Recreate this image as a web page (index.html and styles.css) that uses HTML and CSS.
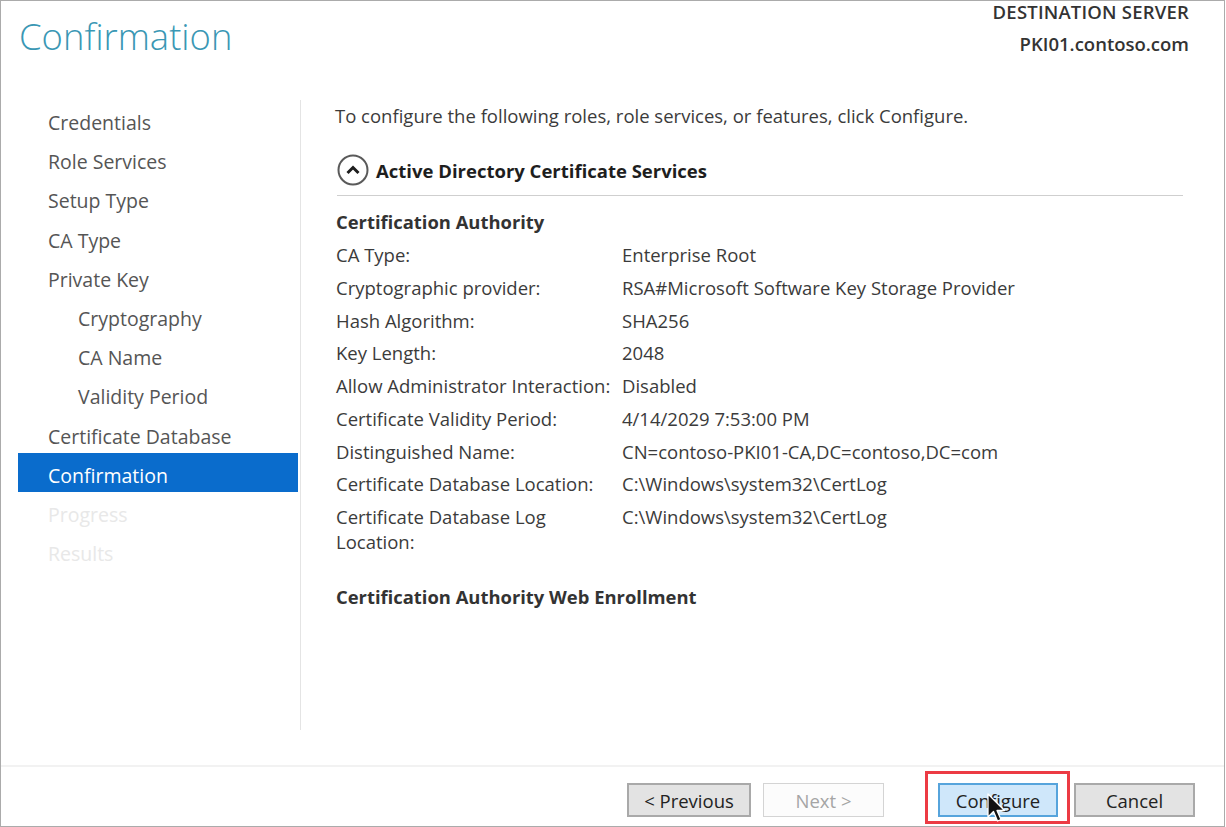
FILE: index.html
```html
<!DOCTYPE html>
<html>
<head>
<meta charset="utf-8">
<link rel="stylesheet" href="styles.css">
</head>
<body>
<div class="window">
  <header class="header">
    <h1 class="title">Confirmation</h1>
    <div class="server">
      <div class="server-label">DESTINATION SERVER</div>
      <div class="server-name">PKI01.contoso.com</div>
    </div>
  </header>
  <main class="main">
    <nav class="nav">
      <div class="nav-item">Credentials</div>
      <div class="nav-item">Role Services</div>
      <div class="nav-item">Setup Type</div>
      <div class="nav-item">CA Type</div>
      <div class="nav-item">Private Key</div>
      <div class="nav-item sub">Cryptography</div>
      <div class="nav-item sub">CA Name</div>
      <div class="nav-item sub">Validity Period</div>
      <div class="nav-item">Certificate Database</div>
      <div class="nav-item active">Confirmation</div>
      <div class="nav-item disabled">Progress</div>
      <div class="nav-item disabled">Results</div>
    </nav>
    <section class="content">
      <p class="intro">To configure the following roles, role services, or features, click Configure.</p>
      <div class="section-head">
        <svg class="collapse" width="32" height="32" viewBox="0 0 32 32">
          <circle cx="16" cy="16" r="14.5" fill="none" stroke="#5a5a5a" stroke-width="2"/>
          <path d="M10.5 19 L16 13.5 L21.5 19" fill="none" stroke="#1e1e1e" stroke-width="3" stroke-linejoin="miter"/>
        </svg>
        <span class="section-title">Active Directory Certificate Services</span>
      </div>
      <h2 class="group-title">Certification Authority</h2>
      <div class="props">
        <div class="label">CA Type:</div><div class="value">Enterprise Root</div>
        <div class="label">Cryptographic provider:</div><div class="value">RSA#Microsoft Software Key Storage Provider</div>
        <div class="label">Hash Algorithm:</div><div class="value">SHA256</div>
        <div class="label">Key Length:</div><div class="value">2048</div>
        <div class="label">Allow Administrator Interaction:</div><div class="value">Disabled</div>
        <div class="label">Certificate Validity Period:</div><div class="value">4/14/2029 7:53:00 PM</div>
        <div class="label">Distinguished Name:</div><div class="value">CN=contoso-PKI01-CA,DC=contoso,DC=com</div>
        <div class="label">Certificate Database Location:</div><div class="value">C:\Windows\system32\CertLog</div>
        <div class="label">Certificate Database Log Location:</div><div class="value">C:\Windows\system32\CertLog</div>
      </div>
      <h2 class="group-title web">Certification Authority Web Enrollment</h2>
    </section>
  </main>
  <footer class="footer">
    <button class="btn">&lt; Previous</button>
    <button class="btn disabled">Next &gt;</button>
    <div class="highlight">
      <button class="btn primary">Configure</button>
      <svg class="cursor" width="22" height="32" viewBox="0 0 22 32">
        <path d="M1 1 L1 24 L6.5 18.5 L10.5 28 L14 26.5 L10 17.5 L17.5 17.5 Z" fill="#111" stroke="#fff" stroke-width="1.3" stroke-linejoin="round"/>
      </svg>
    </div>
    <button class="btn">Cancel</button>
  </footer>
</div>
</body>
</html>
```
FILE: styles.css
```css
* { box-sizing: border-box; }
html, body { margin: 0; padding: 0; background: #fff; }
body {
  width: 1226px;
  height: 827px;
  overflow: hidden;
  font-family: "Open Sans", "Noto Sans", sans-serif;
  color: #3b3b3b;
}
.window {
  width: 1225px;
  height: 827px;
  border: 1px solid #ababab;
  display: flex;
  flex-direction: column;
  background: #fff;
}
.header {
  height: 99px;
  display: flex;
  justify-content: space-between;
  align-items: flex-start;
  padding: 0 35px 0 18px;
}
.title {
  margin: 11px 0 0 0;
  font-size: 36.4px;
  font-weight: 300;
  color: #3a97b4;
  line-height: 48px;
}
.server {
  text-align: right;
  font-size: 18.5px;
  font-weight: 600;
  color: #333;
  line-height: 32px;
  margin-top: -5px;
}
.server-label { letter-spacing: 0.2px; }
.main {
  flex: 1;
  display: flex;
  align-items: flex-start;
}
.nav {
  width: 300px;
  height: 630px;
  padding: 0 0 0 17px;
  border-right: 1px solid #e4e4e4;
  flex: none;
}
.nav-item {
  width: 280px;
  height: 39.2px;
  line-height: 37.2px;
  padding-top: 4px;
  padding-left: 30px;
  font-size: 19.5px;
  color: #555;
}
.nav-item.sub { padding-left: 60px; }
.nav-item.active {
  background: #0a6ccc;
  color: #fff;
}
.nav-item.disabled { color: #e8e8e8; }
.content {
  flex: 1;
  padding: 4px 41px 0 34px;
  font-size: 18.5px;
}
.intro {
  margin: 0;
  line-height: 24px;
  color: #3b3b3b;
}
.section-head {
  margin-top: 26px;
  display: flex;
  align-items: center;
  gap: 7px;
  padding: 0 0 9px 0;
  border-bottom: 1px solid #cfcfcf;
  margin-left: 2px;
}
.collapse { flex: none; }
.section-title {
  font-size: 18.5px;
  font-weight: 700;
  color: #1e1e1e;
}
.group-title {
  margin: 14px 0 0 1px;
  font-size: 18.4px;
  font-weight: 700;
  line-height: 24px;
  color: #333;
}
.props {
  display: grid;
  grid-template-columns: 286px 1fr;
  row-gap: 8.25px;
  margin: 9px 0 0 1px;
  line-height: 24.5px;
}
.label { padding-right: 8px; }
.group-title.web { margin-top: 31px; }
.footer {
  height: 61px;
  border-top: 2px solid #f2f2f2;
  display: flex;
  justify-content: flex-end;
  align-items: flex-start;
  padding: 16px 29px 0 0;
}
.btn {
  font-family: inherit;
  font-size: 18.5px;
  height: 34px;
  width: 124px;
  background: #e3e3e3;
  border: 2px solid #a9a9a9;
  color: #222;
  padding: 0;
  margin: 0;
}
.btn.disabled {
  width: 121px;
  margin-left: 12px;
  margin-right: 41px;
  background: #fcfcfc;
  border: 1px solid #d4d4d4;
  color: #a5a5a5;
}
.btn.primary {
  width: 120px;
  background: #cfe7fa;
  border: 2px solid #56a4dc;
}
.highlight {
  position: relative;
  margin-top: -12px;
  border: 3px solid #ec3b44;
  padding: 9px 9px 4px 10px;
  margin-right: 4px;
}
.cursor {
  position: absolute;
  left: 59px;
  top: 19px;
}
.footer .btn:last-child { width: 121px; }
```
